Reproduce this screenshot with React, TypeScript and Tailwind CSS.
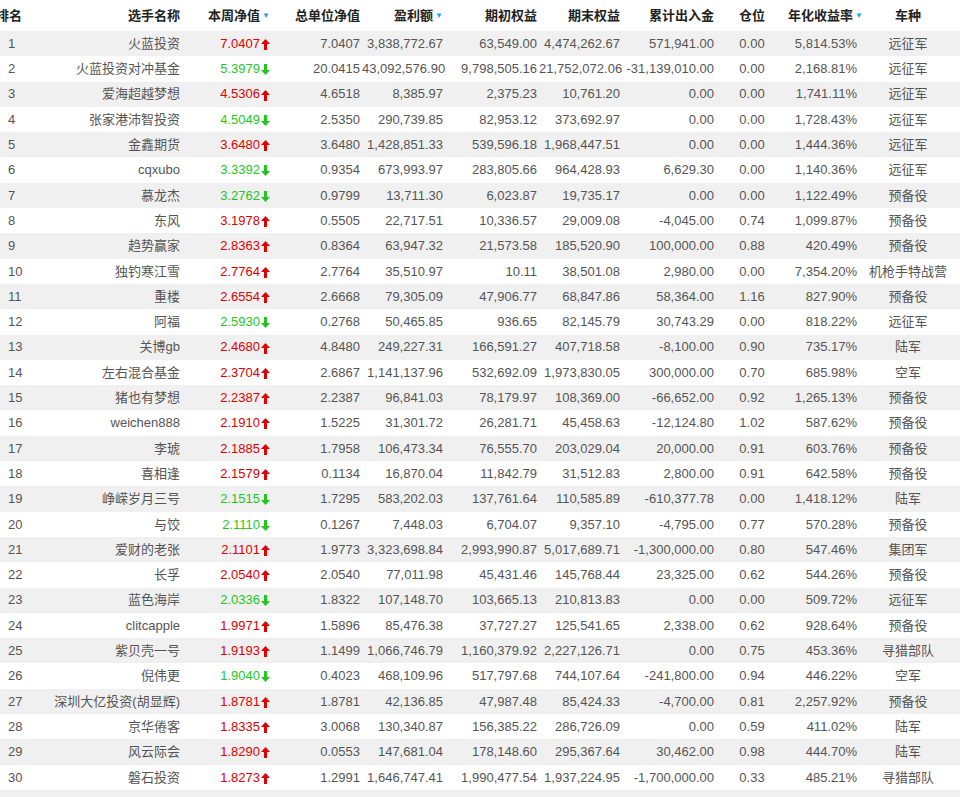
import React from "react";

type Row = [string, string, boolean, string, string, string, string, string, string, string, string];

const raw = `火蓝投资|7.0407|u|7.0407|3,838,772.67|63,549.00|4,474,262.67|571,941.00|0.00|5,814.53%|远征军
火蓝投资对冲基金|5.3979|d|20.0415|43,092,576.90|9,798,505.16|21,752,072.06|-31,139,010.00|0.00|2,168.81%|远征军
爱海超越梦想|4.5306|u|4.6518|8,385.97|2,375.23|10,761.20|0.00|0.00|1,741.11%|远征军
张家港沛智投资|4.5049|d|2.5350|290,739.85|82,953.12|373,692.97|0.00|0.00|1,728.43%|远征军
金鑫期货|3.6480|u|3.6480|1,428,851.33|539,596.18|1,968,447.51|0.00|0.00|1,444.36%|远征军
cqxubo|3.3392|d|0.9354|673,993.97|283,805.66|964,428.93|6,629.30|0.00|1,140.36%|远征军
慕龙杰|3.2762|d|0.9799|13,711.30|6,023.87|19,735.17|0.00|0.00|1,122.49%|预备役
东风|3.1978|u|0.5505|22,717.51|10,336.57|29,009.08|-4,045.00|0.74|1,099.87%|预备役
趋势赢家|2.8363|u|0.8364|63,947.32|21,573.58|185,520.90|100,000.00|0.88|420.49%|预备役
独钓寒江雪|2.7764|u|2.7764|35,510.97|10.11|38,501.08|2,980.00|0.00|7,354.20%|机枪手特战营
重楼|2.6554|u|2.6668|79,305.09|47,906.77|68,847.86|58,364.00|1.16|827.90%|预备役
阿福|2.5930|d|0.2768|50,465.85|936.65|82,145.79|30,743.29|0.00|818.22%|远征军
关博gb|2.4680|u|4.8480|249,227.31|166,591.27|407,718.58|-8,100.00|0.90|735.17%|陆军
左右混合基金|2.3704|u|2.6867|1,141,137.96|532,692.09|1,973,830.05|300,000.00|0.70|685.98%|空军
猪也有梦想|2.2387|u|2.2387|96,841.03|78,179.97|108,369.00|-66,652.00|0.92|1,265.13%|预备役
weichen888|2.1910|u|1.5225|31,301.72|26,281.71|45,458.63|-12,124.80|1.02|587.62%|预备役
李琥|2.1885|u|1.7958|106,473.34|76,555.70|203,029.04|20,000.00|0.91|603.76%|预备役
喜相逢|2.1579|u|0.1134|16,870.04|11,842.79|31,512.83|2,800.00|0.91|642.58%|预备役
峥嵘岁月三号|2.1515|d|1.7295|583,202.03|137,761.64|110,585.89|-610,377.78|0.00|1,418.12%|陆军
与饺|2.1110|d|0.1267|7,448.03|6,704.07|9,357.10|-4,795.00|0.77|570.28%|预备役
爱财的老张|2.1101|u|1.9773|3,323,698.84|2,993,990.87|5,017,689.71|-1,300,000.00|0.80|547.46%|集团军
长孚|2.0540|u|2.0540|77,011.98|45,431.46|145,768.44|23,325.00|0.62|544.26%|预备役
蓝色海岸|2.0336|d|1.8322|107,148.70|103,665.13|210,813.83|0.00|0.00|509.72%|远征军
clitcapple|1.9971|u|1.5896|85,476.38|37,727.27|125,541.65|2,338.00|0.62|928.64%|预备役
紫贝壳一号|1.9193|u|1.1499|1,066,746.79|1,160,379.92|2,227,126.71|0.00|0.75|453.36%|寻猎部队
倪伟更|1.9040|d|0.4023|468,109.96|517,797.68|744,107.64|-241,800.00|0.94|446.22%|空军
深圳大亿投资(胡显辉)|1.8781|u|1.8781|42,136.85|47,987.48|85,424.33|-4,700.00|0.81|2,257.92%|预备役
京华倦客|1.8335|u|3.0068|130,340.87|156,385.22|286,726.09|0.00|0.59|411.02%|陆军
风云际会|1.8290|u|0.0553|147,681.04|178,148.60|295,367.64|30,462.00|0.98|444.70%|陆军
磐石投资|1.8273|u|1.2991|1,646,747.41|1,990,477.54|1,937,224.95|-1,700,000.00|0.33|485.21%|寻猎部队`;

const rows: Row[] = raw.split("\n").map((l) => {
  const p = l.split("|");
  return [p[0], p[1], p[2] === "u", p[3], p[4], p[5], p[6], p[7], p[8], p[9], p[10]] as Row;
});

const Sort = () => <span className="ml-[2px] text-[8px] text-[#2a9fd8] align-middle">▼</span>;

const Arrow = ({ up }: { up: boolean }) => (
  <svg width="9" height="11" viewBox="0 0 9 11" className="ml-[1px] inline-block">
    {up ? (
      <path d="M4.5 0 L9 5 H6 V11 H3 V5 H0 Z" fill="#e00000" />
    ) : (
      <path d="M4.5 11 L9 6 H6 V0 H3 V6 H0 Z" fill="#1fc71f" />
    )}
  </svg>
);

const W = {
  rank: "shrink-0 w-[40px] pl-[8px] text-left",
  name: "shrink-0 w-[142px] pr-[2px] text-right",
  week: "shrink-0 w-[90px] pr-[2px] text-right",
  total: "shrink-0 w-[90px] pr-[2px] text-right",
  profit: "shrink-0 w-[83px] pr-[2px] text-right",
  start: "shrink-0 w-[94px] pr-[2px] text-right",
  end: "shrink-0 w-[83px] pr-[2px] text-right",
  flow: "shrink-0 w-[94px] pr-[2px] text-right",
  pos: "shrink-0 w-[72px] text-center",
  annual: "shrink-0 w-[71px] pr-[2px] text-right",
  type: "shrink-0 w-[98px] text-center",
  extra: "shrink-0 w-[40px] pl-[8px] text-left",
};

export default function App() {
  return (
    <div
      className="w-[960px] h-[797px] overflow-hidden bg-white text-[13px] text-[#555]"
      style={{ fontFamily: '"Liberation Sans", "Noto Sans CJK SC", sans-serif' }}
    >
      <div className="flex h-[31px] items-center font-bold text-[#222] whitespace-nowrap">
        <div className="shrink-0 w-[40px] text-left -ml-[4px] mr-[4px]">排名</div>
        <div className={W.name}>选手名称</div>
        <div className={W.week}>本周净值<Sort /></div>
        <div className={W.total}>总单位净值</div>
        <div className={W.profit}>盈利额<Sort /></div>
        <div className={W.start}>期初权益</div>
        <div className={W.end}>期末权益</div>
        <div className={W.flow}>累计出入金</div>
        <div className={W.pos}>仓位</div>
        <div className={W.annual}>年化收益率<Sort /></div>
        <div className={W.type}>车种</div>
        <div className={W.extra}>交易</div>
      </div>
      {rows.map((r, i) => (
        <div
          key={i}
          className={`flex h-[25.3px] items-center whitespace-nowrap ${i % 2 === 0 ? "bg-[#f0f0f0]" : "bg-white"}`}
        >
          <div className={W.rank}>{i + 1}</div>
          <div className={W.name}>{r[0]}</div>
          <div className={`${W.week} ${r[2] ? "text-[#e00000]" : "text-[#1fc71f]"}`}>
            {r[1]}
            <Arrow up={r[2]} />
          </div>
          <div className={W.total}>{r[3]}</div>
          <div className={W.profit}>{r[4]}</div>
          <div className={W.start}>{r[5]}</div>
          <div className={W.end}>{r[6]}</div>
          <div className={W.flow}>{r[7]}</div>
          <div className={W.pos}>{r[8]}</div>
          <div className={W.annual}>{r[9]}</div>
          <div className={W.type}>{r[10]}</div>
          <div className={W.extra}></div>
        </div>
      ))}
      <div className="h-[25px] bg-[#f0f0f0]" />
    </div>
  );
}
